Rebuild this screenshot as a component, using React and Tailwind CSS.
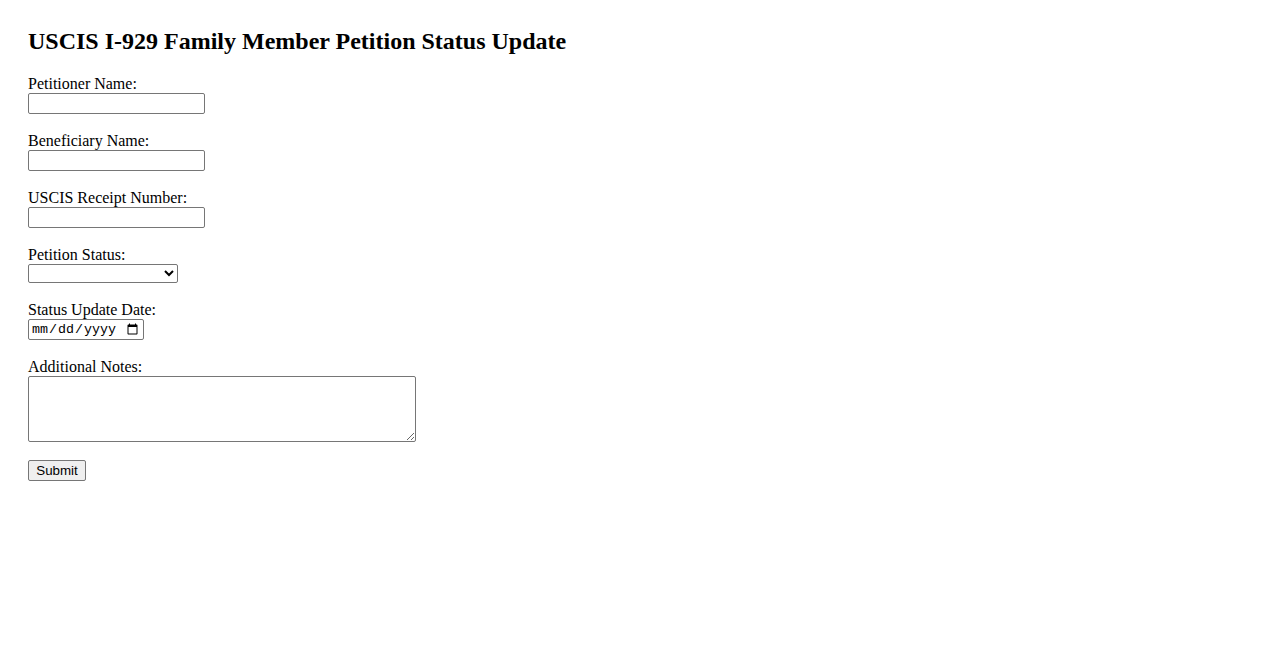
const fields = [
  { id: "petitioner", label: "Petitioner Name:", type: "text" },
  { id: "beneficiary", label: "Beneficiary Name:", type: "text" },
  { id: "receipt", label: "USCIS Receipt Number:", type: "text" },
];

export default function App() {
  return (
    <div className="min-h-[650px] bg-white px-[28px] pt-[28px] text-[16px] text-black font-['Liberation_Serif',serif]">
      <h2 className="mb-[20px] text-[24px] font-bold leading-[27px]">
        USCIS I-929 Family Member Petition Status Update
      </h2>

      <form onSubmit={(e) => e.preventDefault()}>
        {fields.map((f) => (
          <div key={f.id} className="mb-[18px]">
            <label htmlFor={f.id} className="block leading-[18px]">
              {f.label}
            </label>
            <input
              id={f.id}
              type={f.type}
              className="block h-[21px] w-[177px] rounded-[2px] border border-[#767676] bg-white px-[2px] text-[13.33px] font-['Liberation_Sans',sans-serif]"
            />
          </div>
        ))}

        <div className="mb-[18px]">
          <label htmlFor="status" className="block leading-[18px]">
            Petition Status:
          </label>
          <select
            id="status"
            className="block h-[19px] w-[150px] rounded-[2px] border border-[#767676] bg-white text-[13.33px] font-['Liberation_Sans',sans-serif]"
          >
            <option value=""></option>
            <option>Received</option>
            <option>In Review</option>
            <option>Approved</option>
            <option>Denied</option>
          </select>
        </div>

        <div className="mb-[18px]">
          <label htmlFor="date" className="block leading-[18px]">
            Status Update Date:
          </label>
          <input
            id="date"
            type="date"
            className="block h-[21px] w-[116px] rounded-[2px] border border-[#767676] bg-white px-[2px] text-[13.33px] font-['Liberation_Mono',monospace]"
          />
        </div>

        <div className="mb-[18px]">
          <label htmlFor="notes" className="block leading-[18px]">
            Additional Notes:
          </label>
          <textarea
            id="notes"
            className="block h-[66px] w-[388px] rounded-[2px] border border-[#767676] bg-white px-[2px] text-[13.33px] font-['Liberation_Mono',monospace]"
          />
        </div>

        <button
          type="submit"
          className="block h-[21px] w-[58px] rounded-[2px] border border-[#767676] bg-[#efefef] text-[13.33px] leading-none font-['Liberation_Sans',sans-serif]"
        >
          Submit
        </button>
      </form>
    </div>
  );
}
